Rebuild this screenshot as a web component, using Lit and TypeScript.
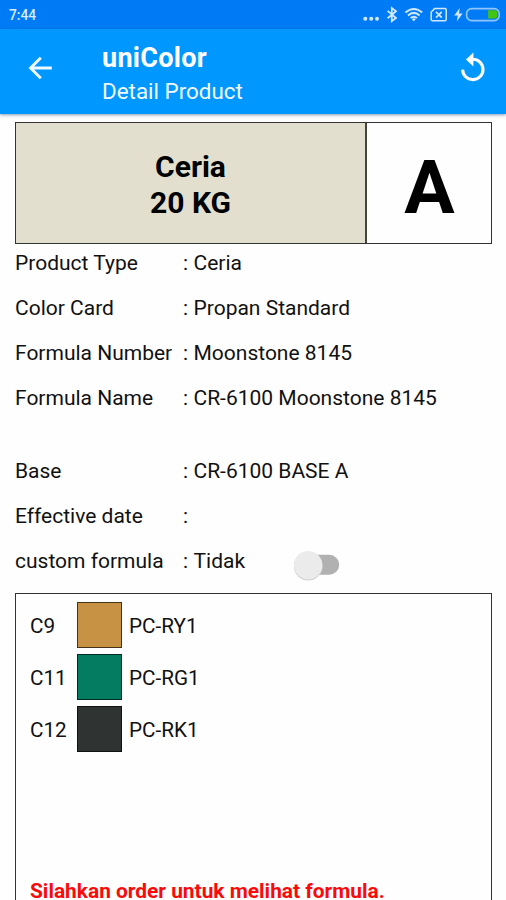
import { LitElement, html, css, svg } from "lit";
import { customElement, property } from "lit/decorators.js";
import { styleMap } from "lit/directives/style-map.js";

interface Field {
  label: string;
  value: string;
  kind?: "spaced" | "toggle";
}

const FIELDS: Field[] = [
  { label: "Product Type", value: "Ceria" },
  { label: "Color Card", value: "Propan Standard" },
  { label: "Formula Number", value: "Moonstone 8145" },
  { label: "Formula Name", value: "CR-6100 Moonstone 8145" },
  { label: "Base", value: "CR-6100 BASE A", kind: "spaced" },
  { label: "Effective date", value: "" },
  { label: "custom formula", value: "Tidak", kind: "toggle" },
];

const COLORANTS = [
  { code: "C9", color: "#c89244", name: "PC-RY1" },
  { code: "C11", color: "#037c61", name: "PC-RG1" },
  { code: "C12", color: "#2f3331", name: "PC-RK1" },
];

@customElement("status-bar")
class StatusBar extends LitElement {
  static styles = css`
    :host {
      display: flex;
      justify-content: space-between;
      height: 29px;
      background: #007bf6;
      color: #d6ecff;
    }
    .clock {
      padding-left: 9px;
      font-size: 13.8px;
      font-weight: 500;
      line-height: 30px;
    }
    .icons {
      display: block;
      flex: none;
    }
  `;
  render() {
    return html`
      <span class="clock">7:44</span>
      <svg class="icons" width="156" height="29" viewBox="350 0 156 29" fill="none" stroke="#cfe7ff">
        ${svg`
          <g fill="#cfe7ff" stroke="none">
            <circle cx="365.3" cy="18.8" r="2"/>
            <circle cx="371.2" cy="18.8" r="2"/>
            <circle cx="377" cy="18.8" r="2"/>
          </g>
          <path d="M387.6 10.9 L396 18 L391.8 21.2 V8 L396 11.2 L387.6 18.2" stroke-width="1.8"/>
          <g stroke-width="2">
            <path d="M405.4 12.6 Q413.8 5.4 422.2 12.6"/>
            <path d="M408 15.4 Q413.8 10.4 419.6 15.4"/>
            <path d="M410.6 18 Q413.8 15.4 417 18"/>
          </g>
          <path d="M413.8 21.4 l-2 -2.4 q2 -1.4 4 0z" fill="#cfe7ff" stroke="none"/>
          <path d="M434.6 8.6 H445 Q446.2 8.6 446.2 9.8 V19.6 Q446.2 20.8 445 20.8 H432.4 Q431.2 20.8 431.2 19.6 V12 Z" stroke-width="1.5"/>
          <path d="M436 11.8 l5.8 5.8 M441.8 11.8 l-5.8 5.8" stroke-width="1.7"/>
          <path d="M459.8 8 L454.2 15.6 H457.8 L456.8 21.4 L462.6 13.4 H459 Z" fill="#cfe7ff" stroke="none"/>
          <rect x="466.6" y="8.6" width="32.6" height="12" rx="5" stroke="#8fc6fb" stroke-width="1.6"/>
          <path d="M488.2 10.2 H495 Q497.4 10.2 497.4 12.6 V16 Q497.4 18.4 495 18.4 H488.2 Z" fill="#43c411" stroke="none"/>
        `}
      </svg>
    `;
  }
}

@customElement("app-bar")
class AppBar extends LitElement {
  static styles = css`
    :host {
      display: flex;
      align-items: flex-start;
      height: 84.5px;
      background: #0097fe;
      color: #fff;
      box-shadow: 0 1px 3px rgba(30, 60, 110, 0.5);
    }
    .back {
      flex: none;
      margin: 22px 0 0 24px;
    }
    .titles {
      flex: 1;
      padding: 13px 0 0 46px;
    }
    .title {
      font-size: 27px;
      font-weight: 700;
      line-height: 32px;
      letter-spacing: 0.3px;
    }
    .subtitle {
      font-size: 22.4px;
      line-height: 26px;
      margin-top: 4px;
      color: #f2faff;
    }
    .reload {
      flex: none;
      margin: 21px 17px 0 0;
    }
  `;
  render() {
    return html`
      <svg class="back" width="32" height="34" viewBox="24 51 32 34" fill="none" stroke="#eef8ff" stroke-width="2.9">
        <path d="M51.8 68 H31 M40.8 57.8 L30.6 68 L40.8 78.2" />
      </svg>
      <div class="titles">
        <div class="title">uniColor</div>
        <div class="subtitle">Detail Product</div>
      </div>
      <svg class="reload" width="34" height="34" viewBox="455 50 34 34">
        <path d="M472.6 59.2 A10.2 10.2 0 1 1 462.6 69.6" fill="none" stroke="#fff" stroke-width="3.1" />
        <path d="M473.4 52.4 V66.4 L466 59.4 Z" fill="#fff" />
      </svg>
    `;
  }
}

@customElement("toggle-switch")
class ToggleSwitch extends LitElement {
  static styles = css`
    :host {
      display: block;
      width: 48px;
      height: 34px;
    }
  `;
  render() {
    return html`
      <svg width="48" height="34" viewBox="292 548 48 34">
        <rect x="299" y="554.8" width="40.2" height="20" rx="10" fill="#b1b1b1" />
        <circle cx="308.2" cy="566.2" r="14.3" fill="#cfcfcf" />
        <circle cx="308.2" cy="565.3" r="14.2" fill="#ebebeb" />
      </svg>
    `;
  }
}

@customElement("colorant-row")
class ColorantRow extends LitElement {
  @property() code = "";
  @property() name = "";
  @property() color = "";
  static styles = css`
    :host {
      display: flex;
      align-items: center;
      height: 46px;
      font-size: 20.7px;
    }
    .code {
      width: 47px;
    }
    .swatch {
      box-sizing: border-box;
      width: 45px;
      height: 46px;
      margin-right: 7px;
      border: 1px solid rgba(0, 0, 0, 0.65);
    }
    .text {
      line-height: 46px;
      margin-top: 2px;
    }
  `;
  render() {
    return html`
      <span class="code text">${this.code}</span>
      <span class="swatch" style=${styleMap({ backgroundColor: this.color })}></span>
      <span class="text">${this.name}</span>
    `;
  }
}

@customElement("app-root")
class AppRoot extends LitElement {
  static styles = css`
    :host {
      display: flex;
      flex-direction: column;
      height: 900px;
      overflow: hidden;
      background: #fefefe;
      font-family: Roboto, "Liberation Sans", sans-serif;
      font-size: 21px;
      color: #111;
    }
    .content {
      flex: 1;
      min-height: 0;
      display: flex;
      flex-direction: column;
      padding: 8.5px 14px 0 15px;
    }
    .hero {
      flex: none;
      box-sizing: border-box;
      display: flex;
      height: 122px;
      border: 1px solid #333;
      color: #000;
      font-weight: 700;
    }
    .product {
      flex: none;
      box-sizing: border-box;
      width: 351px;
      padding-top: 26px;
      border-right: 2px solid #45453e;
      background: #e2dfcf;
      text-align: center;
      font-size: 30px;
      line-height: 36px;
    }
    .base {
      flex: 1;
      padding-left: 1px;
      text-align: center;
      font-size: 75px;
      line-height: 128px;
    }
    .fields {
      flex: none;
      display: flex;
      flex-direction: column;
      gap: 20px;
      padding-top: 6.5px;
      line-height: 25px;
    }
    .field {
      display: flex;
      height: 25px;
      white-space: nowrap;
    }
    .spaced {
      margin-top: 28px;
    }
    .label {
      width: 168px;
    }
    .colon {
      width: 10.5px;
    }
    .toggle .value {
      width: 98.5px;
    }
    .switch {
      margin-top: -1px;
    }
    .panel {
      flex: 1;
      box-sizing: border-box;
      display: flex;
      flex-direction: column;
      gap: 6px;
      margin-top: 19.5px;
      padding: 8px 14px 0;
      border: 1px solid #333;
      border-bottom: 0;
    }
    .notice {
      margin-top: auto;
      color: #fa0a0a;
      font-size: 20.9px;
      font-weight: 700;
      line-height: 18px;
      white-space: nowrap;
    }
  `;
  render() {
    return html`
      <status-bar></status-bar>
      <app-bar></app-bar>
      <main class="content">
        <section class="hero">
          <div class="product">
            <div>Ceria</div>
            <div>20 KG</div>
          </div>
          <div class="base">A</div>
        </section>
        <section class="fields">
          ${FIELDS.map(
            (f) => html`<div class="field ${f.kind ?? ""}">
              <span class="label">${f.label}</span>
              <span class="colon">:</span>
              <span class="value">${f.value}</span>
              ${f.kind === "toggle" ? html`<toggle-switch class="switch"></toggle-switch>` : null}
            </div>`
          )}
        </section>
        <section class="panel">
          ${COLORANTS.map(
            (c) => html`<colorant-row .code=${c.code} .name=${c.name} .color=${c.color}></colorant-row>`
          )}
          <div class="notice">Silahkan order untuk melihat formula.</div>
        </section>
      </main>
    `;
  }
}
